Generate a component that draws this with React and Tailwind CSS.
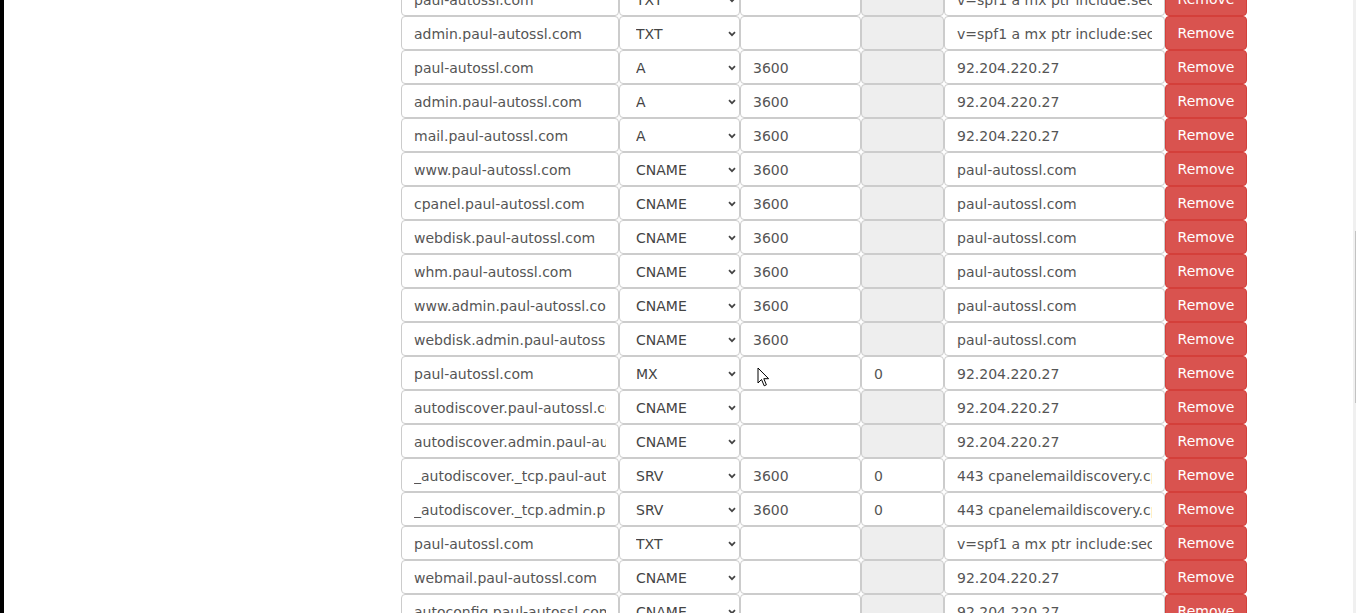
import React from 'react';

const spf = 'v=spf1 a mx ptr include:secureserver.net ~all';
const ip = '92.204.220.27';
const host = 'paul-autossl.com';
const srv = '443 cpanelemaildiscovery.cpanel.net';

const records = [
  { name: 'paul-autossl.com', type: 'TXT', ttl: '', prio: null, value: spf },
  { name: 'admin.paul-autossl.com', type: 'TXT', ttl: '', prio: null, value: spf },
  { name: 'paul-autossl.com', type: 'A', ttl: '3600', prio: null, value: ip },
  { name: 'admin.paul-autossl.com', type: 'A', ttl: '3600', prio: null, value: ip },
  { name: 'mail.paul-autossl.com', type: 'A', ttl: '3600', prio: null, value: ip },
  { name: 'www.paul-autossl.com', type: 'CNAME', ttl: '3600', prio: null, value: host },
  { name: 'cpanel.paul-autossl.com', type: 'CNAME', ttl: '3600', prio: null, value: host },
  { name: 'webdisk.paul-autossl.com', type: 'CNAME', ttl: '3600', prio: null, value: host },
  { name: 'whm.paul-autossl.com', type: 'CNAME', ttl: '3600', prio: null, value: host },
  { name: 'www.admin.paul-autossl.com', type: 'CNAME', ttl: '3600', prio: null, value: host },
  { name: 'webdisk.admin.paul-autossl.com', type: 'CNAME', ttl: '3600', prio: null, value: host },
  { name: 'paul-autossl.com', type: 'MX', ttl: '', prio: '0', value: ip },
  { name: 'autodiscover.paul-autossl.com', type: 'CNAME', ttl: '', prio: null, value: ip },
  { name: 'autodiscover.admin.paul-autossl.com', type: 'CNAME', ttl: '', prio: null, value: ip },
  { name: '_autodiscover._tcp.paul-autossl.com', type: 'SRV', ttl: '3600', prio: '0', value: srv },
  { name: '_autodiscover._tcp.admin.paul-autossl.com', type: 'SRV', ttl: '3600', prio: '0', value: srv },
  { name: 'paul-autossl.com', type: 'TXT', ttl: '', prio: null, value: spf },
  { name: 'webmail.paul-autossl.com', type: 'CNAME', ttl: '', prio: null, value: ip },
  { name: 'autoconfig.paul-autossl.com', type: 'CNAME', ttl: '', prio: null, value: ip },
];

const types = ['A', 'AAAA', 'CNAME', 'MX', 'TXT', 'SRV'];

// shared look of every cell in a row
const field =
  'h-[34px] border border-[#cccccc] rounded-[4px] pl-[12px] pr-[12px] pt-[2px] text-[14px] text-[#555] outline-none';

const Chevron = () => (
  <svg className="absolute right-[4px] top-[15px] pointer-events-none" width="8" height="6" viewBox="0 0 8 6">
    <path d="M1 1.2 L4 4.2 L7 1.2" fill="none" stroke="#444" strokeWidth="1.7" />
  </svg>
);

const RecordRow = ({ r }) => (
  <div className="flex">
    <input readOnly value={r.name} className={`${field} bg-white w-[218px]`} />
    <div className="relative w-[121px]">
      <select
        value={r.type}
        onChange={() => {}}
        className="h-[34px] w-full appearance-none border border-[#cccccc] rounded-[4px] bg-white pl-[16px] pt-[2px] text-[14px] text-[#444] outline-none"
      >
        {types.map((t) => (
          <option key={t}>{t}</option>
        ))}
      </select>
      <Chevron />
    </div>
    <input readOnly value={r.ttl} className={`${field} bg-white w-[121px]`} />
    {r.prio === null ? (
      <input disabled value="" className={`${field} bg-[#eeeeee] w-[83px]`} />
    ) : (
      <input readOnly value={r.prio} className={`${field} bg-white w-[83px]`} />
    )}
    <input readOnly value={r.value} className={`${field} bg-white w-[221px]`} />
    <button className="h-[34px] w-[82px] rounded-[4px] border border-[#d43f3a] bg-[#d9534f] pt-[1px] text-[14px] text-white">
      Remove
    </button>
  </div>
);

const Cursor = () => (
  <svg className="absolute left-[757px] top-[367px]" width="14" height="21" viewBox="0 0 14 21">
    <path d="M1 1 L1 16 L4.5 12.5 L7.2 18.8 L9.4 17.8 L6.8 11.7 L11.6 11.7 Z" fill="white" stroke="black" strokeWidth="1" strokeLinejoin="round" />
  </svg>
);

export default function App() {
  return (
    <div
      className="relative h-screen overflow-hidden bg-white flex"
      style={{ fontFamily: '"DejaVu Sans", Verdana, sans-serif' }}
    >
      <div className="w-[4px] bg-black" />
      <div className="flex-1 pl-[397px] -mt-[18px]">
        {records.map((r, i) => (
          <RecordRow key={i} r={r} />
        ))}
      </div>
      <div className="w-[3px] bg-[#f0f0f0] relative">
        <div className="absolute right-0 top-[231px] h-[172px] w-[1px] bg-[#c2c2c2]" />
      </div>
      <Cursor />
    </div>
  );
}
